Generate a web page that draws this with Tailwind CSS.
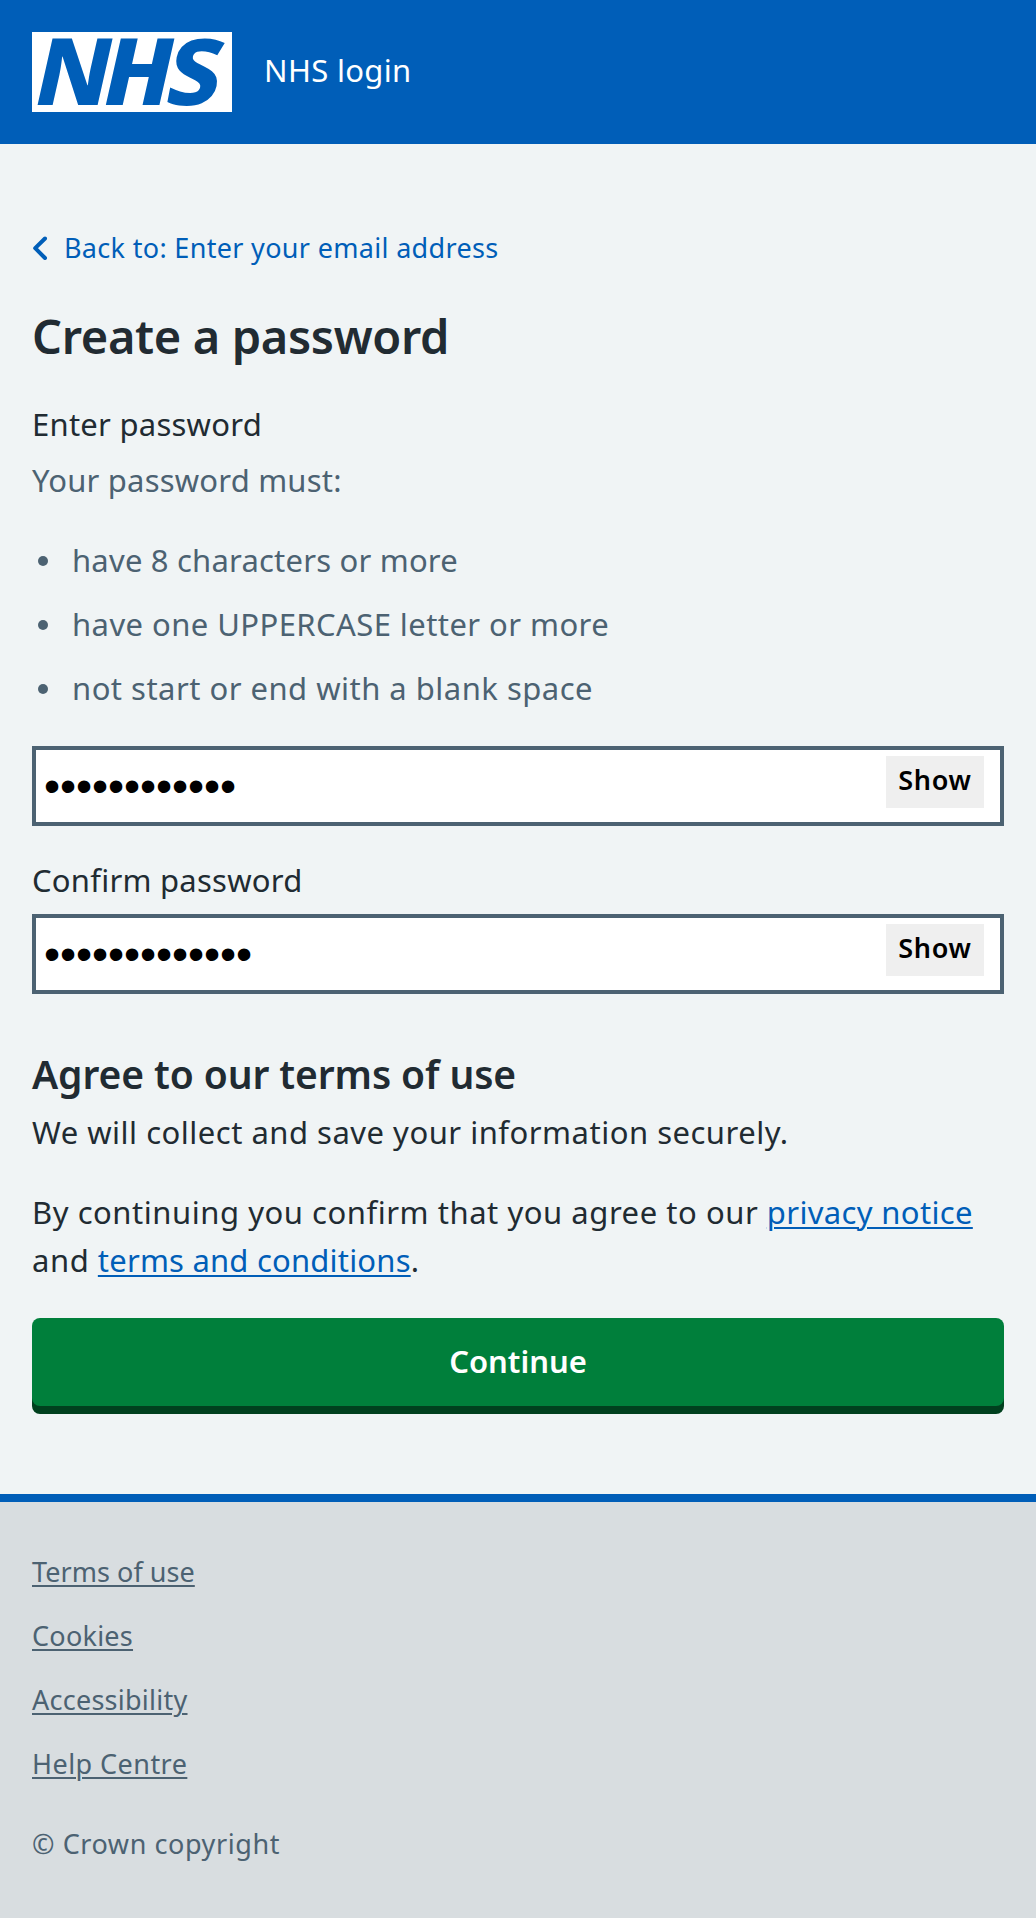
<!DOCTYPE html>
<html lang="en">
<head>
    <meta charset="UTF-8">
    <meta name="viewport" content="width=device-width, initial-scale=1.0">
    <title>Create a password - NHS login</title>
    <script src="https://cdn.jsdelivr.net/npm/@tailwindcss/browser@4"></script>
</head>
<body class="min-h-screen flex flex-col bg-[#f0f4f5] text-[#212b32] font-['Noto_Sans',sans-serif] text-[31px] leading-[48px]">
    <header class="h-36 flex items-center px-8 gap-8 bg-[#005eb8] text-white">
        <svg class="w-[200px] h-20 bg-white" viewBox="0 0 200 80" role="img" aria-label="NHS">
            <g fill="#005eb8" font-family="Noto Sans" font-size="92" font-weight="800">
                <text transform="translate(3.5 72.6) scale(1.077 1)" font-style="italic">N</text>
                <text transform="translate(71.8 72.6) scale(1.079 1)" font-style="italic">H</text>
                <text transform="translate(130.6 72.6) skewX(-11) scale(1.04 1)">S</text>
            </g>
        </svg>
        <span class="pb-1 tracking-[0.33px]">NHS login</span>
    </header>

    <main class="px-8 pt-20 pb-20">
        <a href="#" class="flex items-center gap-4 text-[27px] tracking-[0.32px] text-[#005eb8]">
            <svg class="w-4 h-6" viewBox="0 0 16 24" fill="none" stroke="currentColor" stroke-width="4" stroke-linecap="round" stroke-linejoin="round">
                <path d="M13 2.5 3.2 12.2 13 22"/>
            </svg>
            Back to: Enter your email address
        </a>

        <h1 class="mt-9 text-[47px] leading-[56px] font-semibold tracking-[-0.35px]">Create a password</h1>

        <form>
            <label for="password" class="block mt-9 tracking-[0.25px]">Enter password</label>
            <div class="mt-2 text-[#4c6272]">
                <p class="tracking-[0.2px]">Your password must:</p>
                <ul class="mt-8 space-y-4">
                    <li class="flex items-center gap-6 pl-1.5"><span class="size-2.5 mt-0.5 rounded-full bg-[#4c6272]"></span><span class="tracking-[0.2px]">have 8 characters or more</span></li>
                    <li class="flex items-center gap-6 pl-1.5"><span class="size-2.5 mt-0.5 rounded-full bg-[#4c6272]"></span><span class="tracking-[0.43px]">have one UPPERCASE letter or more</span></li>
                    <li class="flex items-center gap-6 pl-1.5"><span class="size-2.5 mt-0.5 rounded-full bg-[#4c6272]"></span><span class="tracking-[0.48px]">not start or end with a blank space</span></li>
                </ul>
            </div>
            <div class="mt-[34px] h-20 flex items-start border-4 border-[#4c6272] bg-white text-black">
                <input id="password" type="password" value="Password1234" class="flex-1 h-[72px] pl-2 font-['Liberation_Sans',sans-serif] text-[46px] tracking-[-0.1px] outline-none">
                <button type="button" class="mt-1.5 mr-4 w-[98px] h-[52px] pb-1 bg-[#efefef] text-[27px] leading-[48px] font-semibold tracking-[0.7px]">Show</button>
            </div>

            <label for="confirm" class="block mt-[30px] tracking-[0.25px]">Confirm password</label>
            <div class="mt-[10px] h-20 flex items-start border-4 border-[#4c6272] bg-white text-black">
                <input id="confirm" type="password" value="Password12345" class="flex-1 h-[72px] pl-2 font-['Liberation_Sans',sans-serif] text-[46px] tracking-[-0.1px] outline-none">
                <button type="button" class="mt-1.5 mr-4 w-[98px] h-[52px] pb-1 bg-[#efefef] text-[27px] leading-[48px] font-semibold tracking-[0.7px]">Show</button>
            </div>

            <h2 class="mt-14 text-[39px] font-semibold tracking-[-0.1px]">Agree to our terms of use</h2>
            <p class="mt-2.5 tracking-[0.5px]">We will collect and save your information securely.</p>
            <p class="mt-8 tracking-[0.54px]">
                By continuing you confirm that you agree to our
                <a href="#" class="text-[#005eb8] underline decoration-2 underline-offset-[3px] tracking-[0.34px]">privacy notice</a><br>
                and <a href="#" class="text-[#005eb8] underline decoration-2 underline-offset-[3px] tracking-[0.2px]">terms and conditions</a>.
            </p>

            <button type="button" class="block w-full h-[88px] mt-[34px] mb-2 pb-0.5 rounded-lg bg-[#007f3b] shadow-[0_8px_0_#00401e] text-white font-semibold">Continue</button>
        </form>
    </main>

    <footer class="flex-1 px-8 pt-[46px] border-t-8 border-[#005eb8] bg-[#d8dde0] text-[#4c6272] text-[27px]">
        <ul class="space-y-4">
            <li><a href="#" class="underline decoration-2 underline-offset-[3px] tracking-[0.05px]">Terms of use</a></li>
            <li><a href="#" class="underline decoration-2 underline-offset-[3px] tracking-[0.25px]">Cookies</a></li>
            <li><a href="#" class="underline decoration-2 underline-offset-[3px] tracking-[0.25px]">Accessibility</a></li>
            <li><a href="#" class="underline decoration-2 underline-offset-[3px] tracking-[0.45px]">Help Centre</a></li>
        </ul>
        <p class="mt-8 tracking-[0.58px]">© Crown copyright</p>
    </footer>
</body>
</html>
